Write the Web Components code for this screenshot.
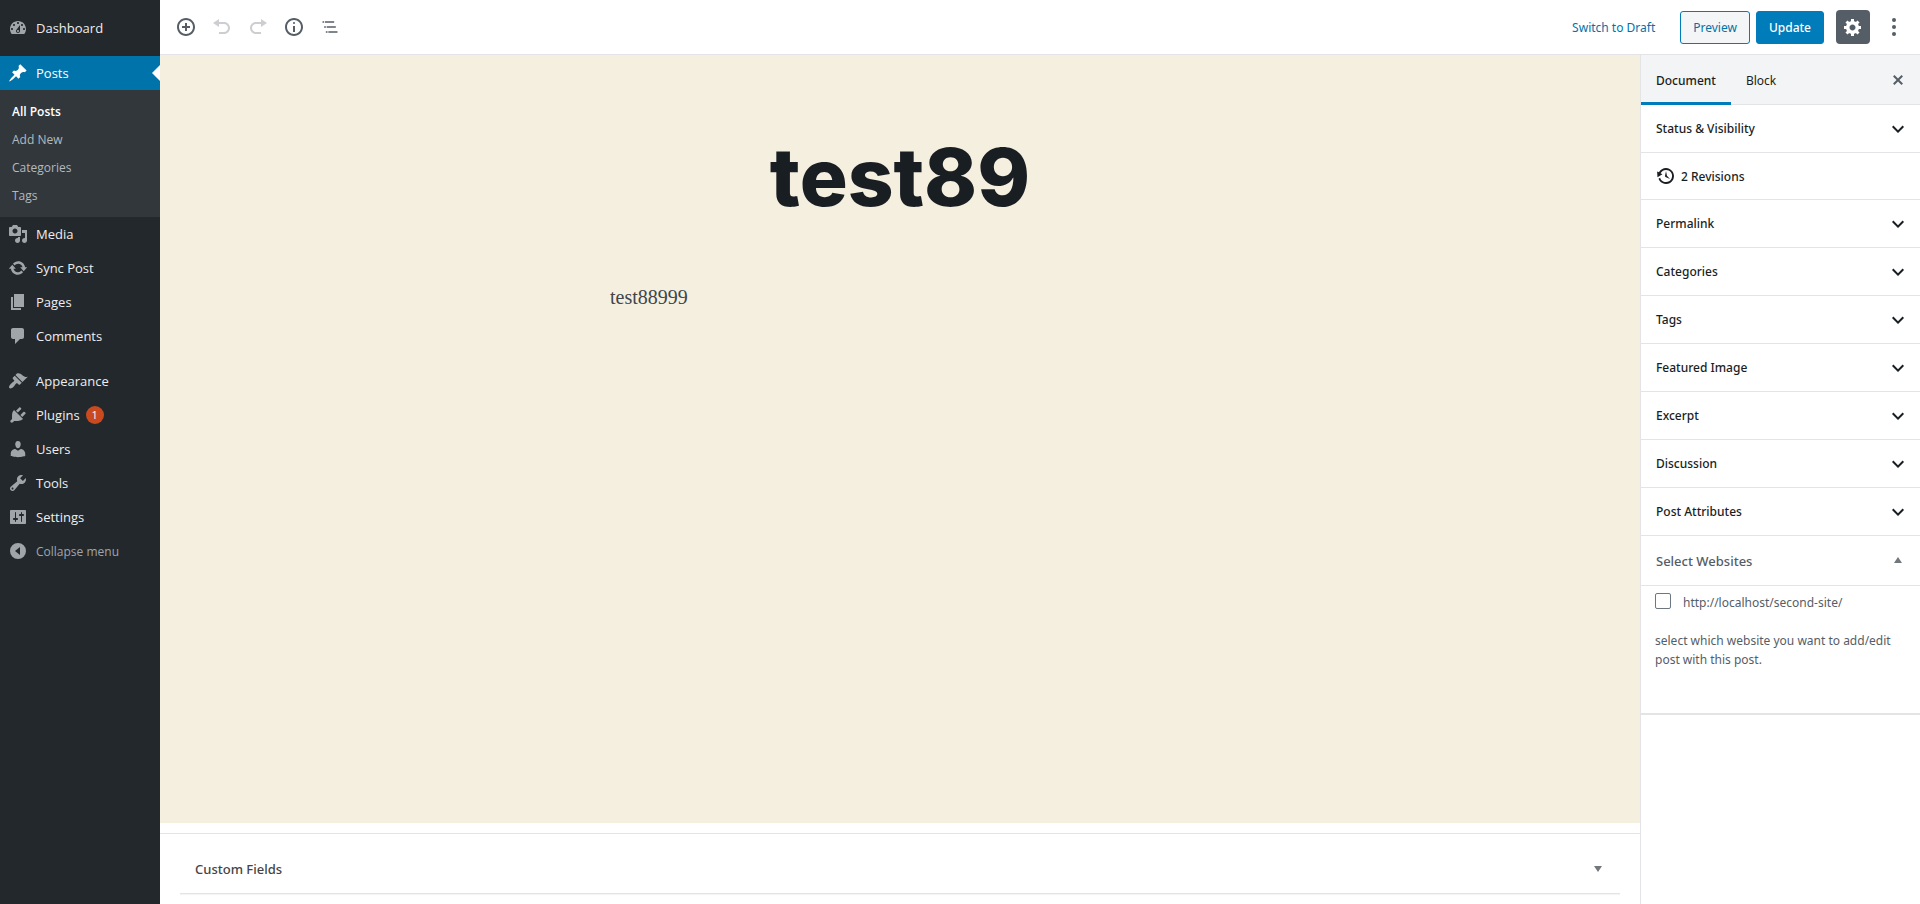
<!DOCTYPE html>
<html lang="en">
<head>
<meta charset="utf-8">
<meta name="viewport" content="width=device-width, initial-scale=1">
<title>Edit Post</title>
<style>
  html, body { margin: 0; height: 100%; }
  body {
    font-family: "Noto Sans", "Open Sans", sans-serif;
    font-size: 12px;
    color: #191e23;
    background: #fff;
  }
</style>
</head>
<body>
<post-editor></post-editor>

<script>
const ICONS = {
  dashboard: '<path d="M3.76 16h12.48c1.1-1.37 1.76-3.11 1.76-5 0-4.42-3.58-8-8-8s-8 3.58-8 8c0 1.89.66 3.63 1.76 5zM10 4c.55 0 1 .45 1 1s-.45 1-1 1-1-.45-1-1 .45-1 1-1zM6 6c.55 0 1 .45 1 1s-.45 1-1 1-1-.45-1-1 .45-1 1-1zm8 0c.55 0 1 .45 1 1s-.45 1-1 1-1-.45-1-1 .45-1 1-1zm-5.37 5.55L12 7v6c0 1.1-.9 2-2 2s-2-.9-2-2c0-.57.24-1.08.63-1.45zM4 10c.55 0 1 .45 1 1s-.45 1-1 1-1-.45-1-1 .45-1 1-1zm12 0c.55 0 1 .45 1 1s-.45 1-1 1-1-.45-1-1 .45-1 1-1zm-5 3c0-.55-.45-1-1-1s-1 .45-1 1 .45 1 1 1 1-.45 1-1z"/>',
  posts: '<path d="M10.44 3.02l1.82-1.82 6.36 6.35-1.83 1.82c-1.05-.68-2.48-.57-3.41.36l-.75.75c-.92.93-1.04 2.35-.35 3.41l-1.83 1.82-2.41-2.41-2.8 2.79c-.42.42-3.38 2.71-3.8 2.29s1.86-3.39 2.28-3.81l2.79-2.79L4.1 9.36l1.83-1.82c1.05.69 2.48.57 3.4-.36l.75-.75c.93-.92 1.05-2.35.36-3.41z"/>',
  media: '<path d="M13 11V4c0-.55-.45-1-1-1h-1.67L9 1H5L3.67 3H2c-.55 0-1 .45-1 1v7c0 .55.45 1 1 1h10c.55 0 1-.45 1-1zM7 4.5c1.38 0 2.5 1.12 2.5 2.5S8.38 9.5 7 9.5 4.5 8.38 4.5 7 5.62 4.5 7 4.5zM14 6h5v10.5c0 1.38-1.12 2.5-2.5 2.5S14 17.88 14 16.5s1.12-2.5 2.5-2.5c.17 0 .34.02.5.05V9h-3V6zm-4 8.05V13h2v3.5c0 1.38-1.12 2.5-2.5 2.5S7 17.88 7 16.5 8.12 14 9.5 14c.17 0 .34.02.5.05z"/>',
  sync: '<path d="M10.2 3.28c3.53 0 6.43 2.61 6.92 6h2.08l-3.5 4-3.5-4h2.32c-.45-1.97-2.21-3.45-4.32-3.45-1.45 0-2.73.71-3.54 1.78L4.95 5.66C6.23 4.2 8.11 3.28 10.2 3.28zm-.4 13.44c-3.52 0-6.43-2.61-6.92-6H.8l3.5-4c1.17 1.33 2.33 2.67 3.5 4H5.48c.45 1.97 2.21 3.45 4.32 3.45 1.45 0 2.73-.71 3.54-1.78l1.71 1.95c-1.28 1.46-3.15 2.38-5.25 2.38z"/>',
  pages: '<path d="M6 15V2h10v13H6zm-1 1h8v2H3V5h2v11z"/>',
  comments: '<path d="M5 2h9c1.1 0 2 .9 2 2v7c0 1.1-.9 2-2 2h-2l-5 5v-5H5c-1.1 0-2-.9-2-2V4c0-1.1.9-2 2-2z"/>',
  appearance: '<path d="M14.48 11.06L7.41 3.99l1.5-1.5c.5-.56 2.3-.47 3.51.32 1.21.8 1.43 1.28 2.91 2.1 1.18.64 2.45 1.26 4.45.85zm-.71.71L6.7 4.7 4.93 6.47c-.39.39-.39 1.02 0 1.41l1.06 1.06c.39.39.39 1.03 0 1.42-.6.6-1.43 1.11-2.21 1.69-.35.26-.7.53-1.01.84C1.43 14.23.4 16.08 1.4 17.07c.99 1 2.84-.03 4.18-1.36.31-.31.58-.66.85-1.02.57-.78 1.08-1.61 1.69-2.21.39-.39 1.02-.39 1.41 0l1.06 1.06c.39.39 1.02.39 1.41 0z"/>',
  plugins: '<path d="M13.11 4.36L9.87 7.6 8 5.73l3.24-3.24c.35-.34 1.05-.2 1.56.32.52.51.66 1.21.31 1.55zm-8 1.77l.91-1.12 9.01 9.01-1.19.84c-.71.71-2.63 1.16-3.82 1.16H6.14L4.9 17.26c-.59.59-1.54.59-2.12 0-.59-.58-.59-1.53 0-2.12l1.24-1.24v-3.88c0-1.13.4-3.19 1.09-3.89zm7.26 3.97l3.24-3.24c.34-.35 1.04-.21 1.55.31.52.51.66 1.21.31 1.55l-3.24 3.25z"/>',
  users: '<path d="M10 9.25c-2.27 0-2.73-3.44-2.73-3.44C7 4.02 7.82 2 9.97 2c2.16 0 2.98 2.02 2.71 3.81 0 0-.41 3.44-2.68 3.44zm0 2.57L12.72 10c2.39 0 4.52 2.33 4.52 4.53v2.49s-3.65 1.13-7.24 1.13c-3.65 0-7.24-1.13-7.24-1.13v-2.49c0-2.25 1.94-4.48 4.47-4.48z"/>',
  tools: '<path d="M16.68 9.77c-1.34 1.34-3.3 1.67-4.95.99l-5.41 6.52c-.99.99-2.59.99-3.58 0s-.99-2.59 0-3.57l6.52-5.42c-.68-1.65-.35-3.61.99-4.95 1.28-1.28 3.12-1.62 4.72-1.06l-2.89 2.89 2.82 2.82 2.86-2.87c.53 1.58.18 3.39-1.08 4.65zM3.81 16.21c.4.39 1.04.39 1.43 0 .4-.4.4-1.04 0-1.43-.39-.4-1.03-.4-1.43 0-.39.39-.39 1.03 0 1.43z"/>',
  sliders: '<path d="M18 16V4c0-.55-.45-1-1-1H3c-.55 0-1 .45-1 1v12c0 .55.45 1 1 1h14c.55 0 1-.45 1-1zM8 11h1c.55 0 1 .45 1 1s-.45 1-1 1H8v1.5c0 .28-.22.5-.5.5s-.5-.22-.5-.5V13H6c-.55 0-1-.45-1-1s.45-1 1-1h1V5.5c0-.28.22-.5.5-.5s.5.22.5.5V11zm5-2h-1c-.55 0-1-.45-1-1s.45-1 1-1h1V5.5c0-.28.22-.5.5-.5s.5.22.5.5V7h1c.55 0 1 .45 1 1s-.45 1-1 1h-1v5.5c0 .28-.22.5-.5.5s-.5-.22-.5-.5V9z"/>',
  collapse: '<path fill-rule="evenodd" d="M10 2a8 8 0 1 0 0 16 8 8 0 0 0 0-16zM12 6v8l-5-4z"/>',
  insert: '<path d="M10 1c-5 0-9 4-9 9s4 9 9 9 9-4 9-9-4-9-9-9zm0 16c-3.9 0-7-3.1-7-7s3.1-7 7-7 7 3.1 7 7-3.1 7-7 7zm1-11H9v3H6v2h3v3h2v-3h3V9h-3V6z"/>',
  undo: '<path d="M12 5H7V2L1 6l6 4V7h5c2.2 0 4 1.8 4 4s-1.8 4-4 4H7v2h5c3.3 0 6-2.7 6-6s-2.7-6-6-6z"/>',
  redo: '<path d="M8 5h5V2l6 4-6 4V7H8c-2.2 0-4 1.8-4 4s1.8 4 4 4h5v2H8c-3.3 0-6-2.7-6-6s2.7-6 6-6z"/>',
  info: '<path d="M9 15h2V9H9v6zm1-10c-.5 0-1 .5-1 1s.5 1 1 1 1-.5 1-1-.5-1-1-1zm0-4c-5 0-9 4-9 9s4 9 9 9 9-4 9-9-4-9-9-9zm0 16c-3.9 0-7-3.1-7-7s3.1-7 7-7 7 3.1 7 7-3.1 7-7 7z"/>',
  outline: '<path transform="scale(.8333)" d="M5 5H3v2h2V5zm3 8h11v-2H8v2zm9-8H6v2h11V5zM7 11H5v2h2v-2zm0 8h2v-2H7v2zm3-2v2h11v-2H10z"/>',
  gear: '<path d="M18 12h-2.18c-.17.7-.44 1.35-.81 1.93l1.54 1.54-2.1 2.1-1.54-1.54c-.58.36-1.23.63-1.91.79V19H8v-2.18c-.68-.16-1.33-.43-1.91-.79l-1.54 1.54-2.12-2.12 1.54-1.54c-.36-.58-.63-1.23-.79-1.91H1V9.03h2.17c.16-.7.44-1.35.8-1.94L2.43 5.55l2.1-2.1 1.54 1.54c.58-.37 1.24-.64 1.93-.81V2h3v2.18c.68.16 1.33.43 1.91.79l1.54-1.54 2.12 2.12-1.54 1.54c.36.59.64 1.24.8 1.94H18V12zm-8.5 1.5c1.66 0 3-1.34 3-3s-1.34-3-3-3-3 1.34-3 3 1.34 3 3 3z"/>',
  more: '<circle cx="10" cy="3" r="2"/><circle cx="10" cy="10" r="2"/><circle cx="10" cy="17" r="2"/>',
  close: '<path d="M14.95 6.46L11.41 10l3.54 3.54-1.41 1.41L10 11.42l-3.53 3.53-1.42-1.42L8.58 10 5.05 6.47l1.42-1.42L10 8.58l3.54-3.53z"/>',
  chevron: '<path d="M5.41 6.59L10 11.17l4.59-4.58L16 8l-6 6-6-6z"/>',
  revisions: '<path d="M13.65 2.88c3.93 2.01 5.48 6.84 3.47 10.77s-6.83 5.48-10.77 3.47c-1.87-.96-3.2-2.56-3.86-4.4l1.64-1.03c.45 1.57 1.52 2.95 3.08 3.76 3.01 1.54 6.69.35 8.23-2.66 1.55-3.01.36-6.69-2.65-8.24C9.78 3.01 6.1 4.2 4.56 7.21l1.88.97-4.95 3.08-.39-5.82 1.78.91C4.9 2.4 9.75.89 13.65 2.88zm-4.36 7.83C9.11 10.53 9 10.28 9 10c0-.07.03-.12.04-.19h-.01L10 5l.97 4.81L14 13l-4.5-2.12.02-.02c-.08-.04-.16-.09-.23-.15z"/>',
  up: '<path d="M10 6l4 6H6z"/>',
  down: '<path d="M6 7h8l-4 6z"/>'
};

// Registers an element whose shadow root is cloned from the given markup.
function define(name, render) {
  customElements.define(name, class extends HTMLElement {
    constructor() {
      super();
      this.attachShadow({ mode: 'open' });
    }
    connectedCallback() {
      if (this.shadowRoot.childNodes.length) return;
      const t = document.createElement('template');
      t.innerHTML = render(this);
      this.shadowRoot.append(t.content.cloneNode(true));
    }
  });
}

define('wp-icon', el => `
  <style>
    :host { display: block; flex: none; width: 20px; height: 20px; }
    svg { display: block; width: 100%; height: 100%; fill: currentColor; }
  </style>
  <svg viewBox="0 0 20 20" aria-hidden="true">${ICONS[el.getAttribute('name')]}</svg>`);

define('menu-item', el => `
  <style>
    :host { display: block; color: #eee; --icon: #a0a5aa; font-size: 13px; }
    :host([current]) { background: #0073aa; color: #fff; --icon: #fff; }
    :host([muted]) { color: #a0a5aa; font-size: 12px; }
    a {
      position: relative; display: flex; align-items: center; gap: 8px;
      height: 34px; padding: 0 8px; color: inherit; text-decoration: none;
    }
    wp-icon { color: var(--icon); }
    span { display: flex; align-items: center; gap: 6px; white-space: nowrap; }
    :host([current]) a::after {
      content: ""; position: absolute; right: 0; top: 9px;
      border: 8px solid transparent; border-left: 0; border-right-color: #fff;
    }
  </style>
  <a href="#"><wp-icon name="${el.getAttribute('icon')}"></wp-icon><span><slot></slot></span></a>`);

define('count-badge', () => `
  <style>
    :host {
      display: block; width: 18px; height: 18px; border-radius: 9px;
      background: #ca4a1f; color: #fff; font-size: 11px; line-height: 18px; text-align: center;
    }
  </style><slot></slot>`);

define('sub-item', () => `
  <style>
    :host { display: block; color: #b4b9be; font-size: 12px; }
    :host([current]) { color: #fff; font-weight: 600; }
    a { display: block; padding: 0 12px; line-height: 28px; color: inherit; text-decoration: none; }
  </style>
  <a href="#"><slot></slot></a>`);

define('admin-menu', () => `
  <style>
    :host { display: block; background: #23282d; font-family: "Open Sans", "Noto Sans", sans-serif; }
    nav { display: flex; flex-direction: column; padding-top: 11px; }
    .group { margin-bottom: 11px; }
    .sub { background: #32373c; padding: 8px 0 7px; }
  </style>
  <nav aria-label="Main menu">
    <div class="group"><menu-item icon="dashboard">Dashboard</menu-item></div>
    <div class="group">
      <menu-item icon="posts" current>Posts</menu-item>
      <div class="sub">
        <sub-item current>All Posts</sub-item>
        <sub-item>Add New</sub-item>
        <sub-item>Categories</sub-item>
        <sub-item>Tags</sub-item>
      </div>
      <menu-item icon="media">Media</menu-item>
      <menu-item icon="sync">Sync Post</menu-item>
      <menu-item icon="pages">Pages</menu-item>
      <menu-item icon="comments">Comments</menu-item>
    </div>
    <div class="group">
      <menu-item icon="appearance">Appearance</menu-item>
      <menu-item icon="plugins">Plugins <count-badge>1</count-badge></menu-item>
      <menu-item icon="users">Users</menu-item>
      <menu-item icon="tools">Tools</menu-item>
      <menu-item icon="sliders">Settings</menu-item>
      <menu-item icon="collapse" muted>Collapse menu</menu-item>
    </div>
  </nav>`);

define('icon-button', el => `
  <style>
    :host { display: block; flex: none; color: #555d66; --size: 36px; }
    :host([disabled]) { color: #ccced1; }
    :host([pressed]) { --size: 34px; color: #fff; }
    button {
      display: grid; place-items: center; width: var(--size); height: var(--size);
      padding: 0; border: 0; border-radius: 4px; background: none; color: inherit;
    }
    :host([pressed]) button { background: #555d66; }
  </style>
  <button type="button" aria-label="${el.getAttribute('label')}" ${el.hasAttribute('disabled') ? 'disabled' : ''}>
    <wp-icon name="${el.getAttribute('icon')}"></wp-icon>
  </button>`);

define('text-button', () => `
  <style>
    :host { display: block; flex: none; color: #0073aa; }
    button {
      box-sizing: border-box; height: 33px; padding: 0 12px; font: inherit; color: inherit;
      background: none; border: 1px solid transparent; border-radius: 3px; white-space: nowrap;
    }
    :host([kind="secondary"]) button { background: #f3f5f6; border-color: #007cba; }
    :host([kind="primary"]) button { background: #007cba; border-color: #007cba; color: #fff; font-weight: 500; }
  </style>
  <button type="button"><slot></slot></button>`);

define('editor-toolbar', () => `
  <style>
    :host {
      display: flex; align-items: center; justify-content: space-between;
      box-sizing: border-box; height: 55px; padding: 0 8px; background: #fff;
      border-bottom: 1px solid #e2e4e7;
    }
    div { display: flex; align-items: center; }
    .right { gap: 6px; }
    .link { margin-right: 6px; }
    .gear { margin-left: 6px; }
  </style>
  <div>
    <icon-button icon="insert" label="Add block"></icon-button>
    <icon-button icon="undo" label="Undo" disabled></icon-button>
    <icon-button icon="redo" label="Redo" disabled></icon-button>
    <icon-button icon="info" label="Content structure"></icon-button>
    <icon-button icon="outline" label="Block navigation"></icon-button>
  </div>
  <div class="right">
    <text-button class="link">Switch to Draft</text-button>
    <text-button kind="secondary">Preview</text-button>
    <text-button kind="primary">Update</text-button>
    <icon-button class="gear" icon="gear" label="Settings" pressed></icon-button>
    <icon-button icon="more" label="More tools"></icon-button>
  </div>`);

define('meta-box', () => `
  <style>
    :host { display: block; padding: 10px 0; border-top: 1px solid #e2e4e7; }
    button {
      display: flex; align-items: center; justify-content: space-between;
      box-sizing: border-box; width: calc(100% - 40px); height: 50px; margin: 0 20px; padding: 0 12px 0 15px;
      font: inherit; font-size: 13px; font-weight: 500; color: #444;
      background: #fff; border: 0; border-bottom: 1px solid #e2e4e7;
      box-shadow: 0 1px 1px rgba(0, 0, 0, .04);
    }
    wp-icon { color: #72777c; }
  </style>
  <button type="button" aria-expanded="false"><slot></slot><wp-icon name="down"></wp-icon></button>`);

define('editor-canvas', () => `
  <style>
    :host { display: flex; flex-direction: column; min-width: 0; background: #fff; }
    article { flex: 1; background: #f5efe0; padding: 72px 20px 0; margin-bottom: 10px; }
    h1 {
      margin: 0 auto 55px; max-width: 1000px; font: 800 80px/100px Inter, sans-serif;
      text-align: center; color: #191e23; outline: 0;
    }
    p { margin: 0 auto; max-width: 580px; font: 20px/30px "Liberation Serif", serif; color: #40464d; outline: 0; }
  </style>
  <article>
    <h1 contenteditable="true" spellcheck="false">test89</h1>
    <p contenteditable="true" spellcheck="false">test88999</p>
  </article>
  <meta-box>Custom Fields</meta-box>`);

define('panel-row', () => `
  <style>
    :host { display: block; border-bottom: 1px solid #e2e4e7; }
    button {
      display: flex; align-items: center; justify-content: space-between;
      width: 100%; height: 47px; padding: 0 12px 0 15px; border: 0; background: none;
      font: inherit; font-weight: 500; color: #191e23; text-align: left;
    }
  </style>
  <button type="button" aria-expanded="false"><slot></slot><wp-icon name="chevron"></wp-icon></button>`);

define('site-select', () => `
  <style>
    :host { display: block; border-bottom: 2px solid #e2e4e7; color: #555d66; }
    .head {
      display: flex; align-items: center; justify-content: space-between; box-sizing: border-box;
      width: 100%; height: 50px; padding: 0 12px 0 15px; border: 0; border-bottom: 1px solid #e2e4e7;
      background: none; font: inherit; font-size: 13px; font-weight: 500; color: #555d66;
    }
    .head wp-icon { color: #72777c; }
    .body { padding: 7px 14px 44px; }
    label { display: flex; align-items: start; gap: 12px; line-height: 20px; }
    input {
      appearance: none; flex: none; box-sizing: border-box; width: 16px; height: 16px; margin: 0;
      border: 1px solid #6c7781; border-radius: 2px; background: #fff;
    }
    p { margin: 18px 0 0; line-height: 19px; }
  </style>
  <button type="button" class="head" aria-expanded="true">Select Websites<wp-icon name="up"></wp-icon></button>
  <div class="body">
    <label for="site"><input type="checkbox" id="site">http://localhost/second-site/</label>
    <p>select which website you want to add/edit post with this post.</p>
  </div>`);

define('settings-sidebar', () => `
  <style>
    :host { display: block; background: #fff; border-left: 1px solid #e2e4e7; }
    header {
      display: flex; align-items: stretch; box-sizing: border-box; height: 50px; padding-right: 4px;
      background: #f3f4f5; border-bottom: 1px solid #e2e4e7;
    }
    .tab {
      box-sizing: border-box; height: 50px; padding: 3px 15px 0; border: 0;
      border-bottom: 3px solid transparent; background: none; font: inherit; color: #191e23;
    }
    .tab[aria-selected="true"] { border-color: #007cba; font-weight: 500; }
    icon-button { margin: 7px 0 0 auto; }
    .revisions {
      display: flex; align-items: center; gap: 5px; height: 46px; padding: 0 15px;
      border-bottom: 1px solid #e2e4e7; color: #191e23; text-decoration: none; font-weight: 500;
    }
  </style>
  <header role="tablist">
    <button type="button" class="tab" role="tab" aria-selected="true">Document</button>
    <button type="button" class="tab" role="tab" aria-selected="false">Block</button>
    <icon-button icon="close" label="Close settings"></icon-button>
  </header>
  <panel-row>Status &amp; Visibility</panel-row>
  <a class="revisions" href="#"><wp-icon name="revisions"></wp-icon>2 Revisions</a>
  <panel-row>Permalink</panel-row>
  <panel-row>Categories</panel-row>
  <panel-row>Tags</panel-row>
  <panel-row>Featured Image</panel-row>
  <panel-row>Excerpt</panel-row>
  <panel-row>Discussion</panel-row>
  <panel-row>Post Attributes</panel-row>
  <site-select></site-select>`);

define('post-editor', () => `
  <style>
    :host {
      display: grid; min-height: 100vh;
      grid-template: "menu bar bar" auto "menu canvas side" 1fr / 160px minmax(0, 1fr) 280px;
    }
    admin-menu { grid-area: menu; }
    editor-toolbar { grid-area: bar; }
    editor-canvas { grid-area: canvas; }
    settings-sidebar { grid-area: side; }
  </style>
  <admin-menu></admin-menu>
  <editor-toolbar></editor-toolbar>
  <editor-canvas></editor-canvas>
  <settings-sidebar></settings-sidebar>`);
</script>
</body>
</html>
